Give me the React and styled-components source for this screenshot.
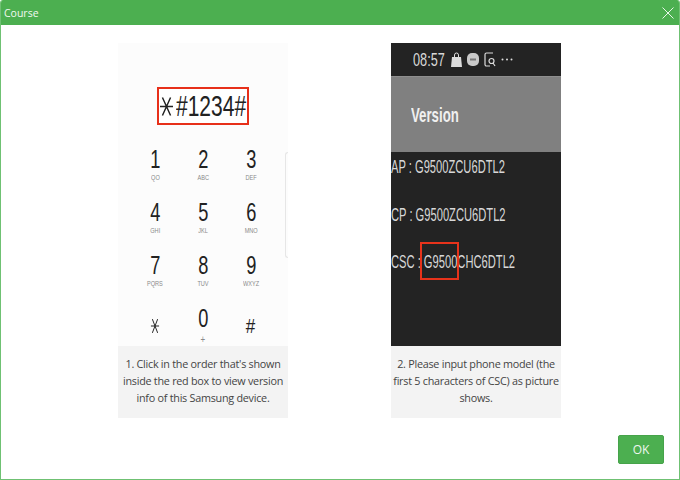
import styled, { createGlobalStyle } from "styled-components";

const GlobalStyle = createGlobalStyle`
  html, body {
    margin: 0;
    padding: 0;
    background: #fff;
  }
`;

const Dialog = styled.div`
  box-sizing: border-box;
  width: 680px;
  height: 480px;
  display: flex;
  flex-direction: column;
  overflow: hidden;
  background: #fff;
  border: 1px solid #6fc173;
  border-top: 0;
  border-radius: 3px 3px 0 0;
  font-family: "Open Sans", "Noto Sans", sans-serif;
`;

const TitleBar = styled.header`
  flex: none;
  height: 25px;
  margin: 0 -1px;
  padding: 0 6px 0 4px;
  display: flex;
  align-items: center;
  justify-content: space-between;
  background: #4caf50;
  color: #f1f8f1;
  font-size: 10.5px;
`;

const Body = styled.main`
  flex: 1;
  display: flex;
  justify-content: center;
  gap: 103px;
  padding: 18px 1px 0 0;
`;

const Card = styled.section`
  width: 170px;
  height: 375px;
  display: flex;
  flex-direction: column;
`;

const Caption = styled.p`
  box-sizing: border-box;
  flex: none;
  height: 72px;
  margin: 0;
  padding: 8.5px 0 0;
  background: #f3f3f3;
  color: #444;
  font-size: 10.8px;
  letter-spacing: -0.26px;
  line-height: 17px;
  text-align: center;
`;

const DialScreen = styled.div`
  position: relative;
  box-sizing: border-box;
  height: 303px;
  padding: 44px 0 0;
  display: flex;
  flex-direction: column;
  align-items: center;
  background: #fcfcfc;
  color: #222;
  overflow: hidden;
`;

const Code = styled.div`
  box-sizing: border-box;
  width: 92px;
  height: 38px;
  display: flex;
  align-items: center;
  justify-content: center;
  gap: 3px;
  background: #fff;
  border: 2px solid #e7301a;
`;

const CodeText = styled.span`
  display: inline-block;
  font-family: "Liberation Sans", sans-serif;
  font-size: 30px;
  line-height: 34px;
  transform: scaleX(0.7);
  margin: 0 -15px;
`;

const Keypad = styled.div`
  margin-top: 21px;
  width: 144px;
  display: grid;
  grid-template-columns: repeat(3, 48px);
  grid-auto-rows: 53px;
`;

const Key = styled.div`
  display: flex;
  flex-direction: column;
  align-items: center;
`;

const Digit = styled.span`
  height: 26px;
  font-family: "Liberation Sans", sans-serif;
  font-size: 26px;
  line-height: 26px;
  transform: scaleX(0.7);
`;

const Letters = styled.span`
  margin-top: 1px;
  font-family: "Liberation Sans", sans-serif;
  font-size: 7px;
  line-height: 9px;
  color: #8a8a8a;
  transform: scaleX(0.8);
`;

const Symbol = styled.span`
  height: 26px;
  margin-top: 8px;
  display: flex;
  align-items: center;
  font-family: "Liberation Sans", sans-serif;
  font-size: 20px;
  transform: scaleX(0.85);
`;

const Plus = styled(Letters)`
  margin-top: 4px;
  font-size: 10px;
`;

const SideHandle = styled.div`
  position: absolute;
  right: 0;
  top: 109px;
  width: 2px;
  height: 104px;
  border: 1px solid #e6e6e6;
  border-right: 0;
  border-radius: 3px 0 0 3px;
`;

const VersionScreen = styled.div`
  position: relative;
  box-sizing: border-box;
  height: 303px;
  display: flex;
  flex-direction: column;
  background: #232323;
  color: #d8d8d8;
  overflow: hidden;
`;

const StatusBar = styled.div`
  flex: none;
  height: 33px;
  padding-left: 22px;
  display: flex;
  align-items: center;
  gap: 5px;
  font-family: "Liberation Sans", sans-serif;
`;

const Clock = styled.span`
  width: 31px;
  margin-right: 2px;
  font-size: 19px;
  transform: scaleX(0.67);
  transform-origin: left center;
  white-space: nowrap;
`;

const AppBar = styled.div`
  flex: none;
  box-sizing: border-box;
  height: 76px;
  padding: 0 0 0 20px;
  display: flex;
  align-items: center;
  background: #808080;
  border-top: 1px solid #8e8e8e;
  color: #f0f0f0;
  font-family: "Liberation Sans", sans-serif;
  font-size: 21px;
  font-weight: 700;
`;

const AppTitle = styled.span`
  transform: scaleX(0.63);
  transform-origin: left center;
`;

const InfoList = styled.div`
  padding-top: 3px;
  display: flex;
  flex-direction: column;
  gap: 23.5px;
`;

const InfoRow = styled.div`
  height: 24px;
  line-height: 24px;
  font-family: "Liberation Sans", sans-serif;
  font-size: 18px;
  white-space: nowrap;
  transform: scaleX(0.62);
  transform-origin: left center;
`;

const Highlight = styled.div`
  position: absolute;
  left: 29px;
  top: 199px;
  width: 39px;
  height: 38px;
  box-sizing: border-box;
  border: 2px solid #e7331b;
`;

const Footer = styled.footer`
  flex: 1;
  display: flex;
  justify-content: flex-end;
  align-items: flex-start;
  padding: 17px 15px 0 0;
`;

const OkButton = styled.button`
  width: 46px;
  height: 29px;
  padding: 0;
  border: 1px solid #46a34a;
  border-radius: 2px;
  background: #4caf50;
  color: #eef7ee;
  font-family: inherit;
  font-size: 12px;
`;

const CloseIcon = () => (
  <svg width="12" height="12" viewBox="0 0 12 12" fill="none" stroke="#e8f5e9" strokeWidth="1">
    <path d="M0.5 0.5L11.5 11.5M11.5 0.5L0.5 11.5" />
  </svg>
);

// six legged star used on the samsung dial pad
const Star = ({ width, height }) => (
  <svg width={width} height={height} viewBox="0 0 16 24" fill="none" stroke="#222" strokeWidth="1.8">
    <path d="M3 1L13 23M13 1L3 23M0 12H16" />
  </svg>
);

const BagIcon = () => (
  <svg width="11" height="15" viewBox="0 0 11 15" fill="#dcdcdc">
    <path d="M1 5H10L11 15H0Z" />
    <path d="M3.5 5V3a2 2 0 0 1 4 0V5" fill="none" stroke="#dcdcdc" />
  </svg>
);

const PayIcon = () => (
  <svg width="12" height="13" viewBox="0 0 12 13">
    <rect width="12" height="13" rx="5" fill="#c9c9c9" />
    <rect x="3" y="5.5" width="6" height="2" fill="#777" />
  </svg>
);

const SearchDocIcon = () => (
  <svg width="12" height="15" viewBox="0 0 12 15" fill="none" stroke="#dcdcdc" strokeWidth="1.2">
    <path d="M6 14H2.5a1.5 1.5 0 0 1-1.5-1.5V2.5A1.5 1.5 0 0 1 2.5 1H9" />
    <circle cx="7.5" cy="9" r="2.5" />
    <path d="M9 11L11 14" />
  </svg>
);

const MoreIcon = () => (
  <svg width="12" height="3" viewBox="0 0 12 3" fill="#dcdcdc">
    <circle cx="1.5" cy="1.5" r="1" />
    <circle cx="6" cy="1.5" r="1" />
    <circle cx="10.5" cy="1.5" r="1" />
  </svg>
);

const keys = [
  ["1", "QO"],
  ["2", "ABC"],
  ["3", "DEF"],
  ["4", "GHI"],
  ["5", "JKL"],
  ["6", "MNO"],
  ["7", "PQRS"],
  ["8", "TUV"],
  ["9", "WXYZ"],
];

export default function App() {
  return (
    <>
      <GlobalStyle />
      <Dialog>
        <TitleBar>
          <span>Course</span>
          <CloseIcon />
        </TitleBar>
        <Body>
          <Card>
            <DialScreen>
              <Code>
                <Star width={13} height={23} />
                <CodeText>#1234#</CodeText>
              </Code>
              <Keypad>
                {keys.map(([digit, letters]) => (
                  <Key key={digit}>
                    <Digit>{digit}</Digit>
                    <Letters>{letters}</Letters>
                  </Key>
                ))}
                <Key>
                  <Symbol>
                    <Star width={10} height={16} />
                  </Symbol>
                </Key>
                <Key>
                  <Digit>0</Digit>
                  <Plus>+</Plus>
                </Key>
                <Key>
                  <Symbol>#</Symbol>
                </Key>
              </Keypad>
              <SideHandle />
            </DialScreen>
            <Caption>
              1. Click in the order that's shown inside the red box to view version info of this Samsung device.
            </Caption>
          </Card>
          <Card>
            <VersionScreen>
              <StatusBar>
                <Clock>08:57</Clock>
                <BagIcon />
                <PayIcon />
                <SearchDocIcon />
                <MoreIcon />
              </StatusBar>
              <AppBar>
                <AppTitle>Version</AppTitle>
              </AppBar>
              <InfoList>
                <InfoRow>AP : G9500ZCU6DTL2</InfoRow>
                <InfoRow>CP : G9500ZCU6DTL2</InfoRow>
                <InfoRow>CSC : G9500CHC6DTL2</InfoRow>
              </InfoList>
              <Highlight />
            </VersionScreen>
            <Caption>
              2. Please input phone model (the first 5 characters of CSC) as picture shows.
            </Caption>
          </Card>
        </Body>
        <Footer>
          <OkButton>OK</OkButton>
        </Footer>
      </Dialog>
    </>
  );
}
